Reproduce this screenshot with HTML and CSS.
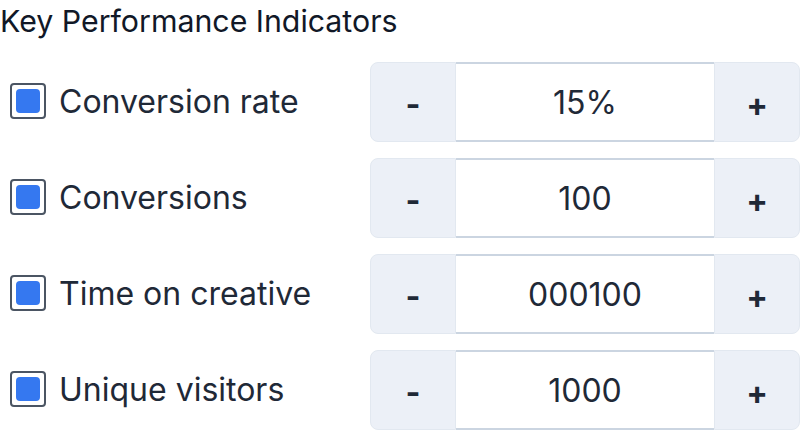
FILE: index.html
```html
<!DOCTYPE html>
<html lang="en">
<head>
  <meta charset="UTF-8">
  <meta name="viewport" content="width=device-width, initial-scale=1.0">
  <title>KPI Targets</title>
  <link rel="stylesheet" href="styles.css">
</head>
<body>
  <h1 class="title">Key Performance Indicators</h1>

  <ul class="kpi-list">
    <li class="kpi-row">
      <label class="kpi-label">
        <input type="checkbox" class="check" checked>
        <span>Conversion rate</span>
      </label>
      <div class="stepper">
        <button class="step minus">-</button>
        <input class="value" type="text" value="15%">
        <button class="step plus">+</button>
      </div>
    </li>
    <li class="kpi-row">
      <label class="kpi-label">
        <input type="checkbox" class="check" checked>
        <span>Conversions</span>
      </label>
      <div class="stepper">
        <button class="step minus">-</button>
        <input class="value" type="text" value="100">
        <button class="step plus">+</button>
      </div>
    </li>
    <li class="kpi-row">
      <label class="kpi-label">
        <input type="checkbox" class="check" checked>
        <span>Time on creative</span>
      </label>
      <div class="stepper">
        <button class="step minus">-</button>
        <input class="value" type="text" value="000100">
        <button class="step plus">+</button>
      </div>
    </li>
    <li class="kpi-row">
      <label class="kpi-label">
        <input type="checkbox" class="check" checked>
        <span>Unique visitors</span>
      </label>
      <div class="stepper">
        <button class="step minus">-</button>
        <input class="value" type="text" value="1000">
        <button class="step plus">+</button>
      </div>
    </li>
  </ul>
</body>
</html>
```

FILE: styles.css
```css
body {
  font-family: Inter, "Noto Sans", sans-serif;
  color: #1f2937;
  margin: 0;
  background: #fff;
}
.title {
  font-size: 30.3px;
  font-weight: 400;
  line-height: 42px;
  margin: 0;
  color: #111827;
}
.kpi-list {
  list-style: none;
  margin: 20px 0 0;
  padding: 0;
  display: flex;
  flex-direction: column;
  gap: 16px;
}
.kpi-row {
  display: flex;
  align-items: center;
  justify-content: space-between;
}
.kpi-label {
  display: flex;
  align-items: center;
  gap: 13px;
  padding-left: 10px;
  font-size: 32px;
  padding-bottom: 2px;
}
.check {
  appearance: none;
  margin: 0;
  width: 36px;
  height: 36px;
  border: 2px solid #4b5563;
  border-radius: 4px;
  padding: 4px;
  background: #fff;
  display: grid;
}
.check:checked::before {
  content: "";
  background: #3578f0;
  border-radius: 4px;
}
.stepper {
  display: flex;
  width: 430px;
  height: 80px;
}
.step {
  width: 86px;
  border: 1px solid #e2e8f0;
  background: #ecf0f7;
  color: #1f2937;
  font-family: inherit;
  font-size: 32px;
  font-weight: 700;
  padding: 4px 0 0;
  cursor: pointer;
}
.minus {
  border-radius: 8px 0 0 8px;
}
.plus {
  border-radius: 0 8px 8px 0;
}
.value {
  flex: 1;
  min-width: 0;
  border: 0;
  border-top: 2px solid #cbd5e1;
  border-bottom: 2px solid #cbd5e1;
  text-align: center;
  font-family: inherit;
  font-size: 32px;
  color: #1f2937;
  padding: 0;
}
```
